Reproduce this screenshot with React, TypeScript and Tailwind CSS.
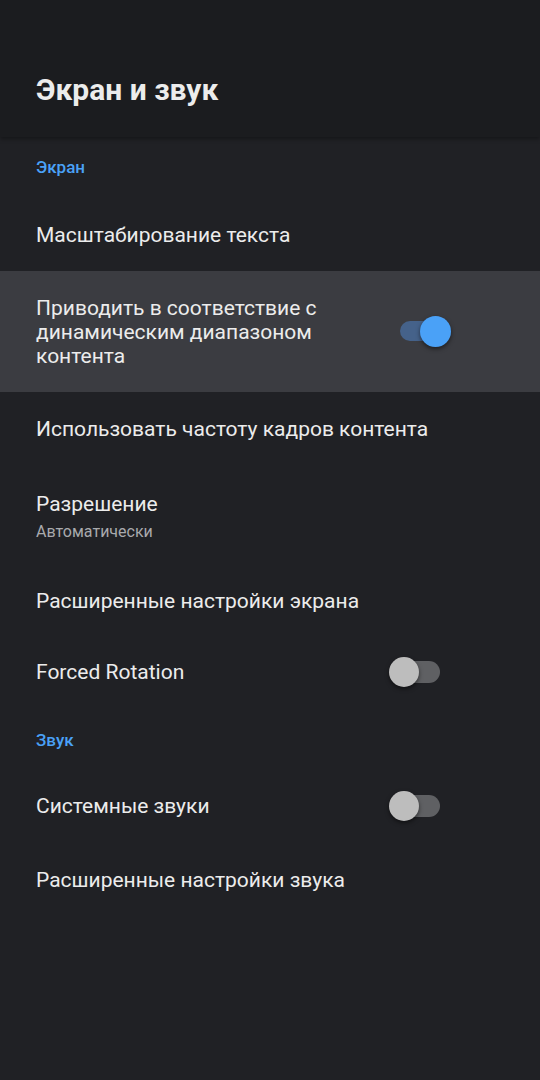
import React from "react";

function Toggle({ on }: { on: boolean }) {
  if (on) {
    return (
      <div className="relative h-[31px] w-[51px] shrink-0">
        <div className="absolute left-0 top-[5px] h-[20px] w-[44px] rounded-full bg-[#45628a]" />
        <div className="absolute right-0 top-0 h-[31px] w-[31px] rounded-full bg-[#4aa1f7] shadow-[0_2px_4px_rgba(0,0,0,0.5)]" />
      </div>
    );
  }
  return (
    <div className="relative h-[30px] w-[51px] shrink-0">
      <div className="absolute right-0 top-[4px] h-[22px] w-[46px] rounded-full bg-[#5f6063]" />
      <div className="absolute left-0 top-0 h-[30px] w-[30px] rounded-full bg-[#bdbdbd] shadow-[0_2px_4px_rgba(0,0,0,0.5)]" />
    </div>
  );
}

function Section({ title, h }: { title: string; h: string }) {
  return (
    <div className={`flex items-center px-9 ${h}`}>
      <span className="text-[17px] font-medium text-[#4aa1f7]">{title}</span>
    </div>
  );
}

function Row({
  label,
  sub,
  h,
  toggle,
}: {
  label: string;
  sub?: string;
  h: string;
  toggle?: boolean;
}) {
  return (
    <div className={`flex items-center justify-between pl-9 pr-[100px] ${h}`}>
      <div className="flex flex-col">
        <span className="text-[21px] leading-[24px] text-[#ececec]">{label}</span>
        {sub && <span className="mt-[7px] text-[16px] leading-[18px] text-[#a9aaad]">{sub}</span>}
      </div>
      {toggle !== undefined && <Toggle on={toggle} />}
    </div>
  );
}

export default function App() {
  return (
    <div className="min-h-[1080px] w-[540px] bg-[#202125] font-['Roboto',sans-serif]">
      <div className="relative z-10 flex h-[137px] items-end bg-[#1b1c1f] px-9 pb-[29px] shadow-[0_2px_4px_rgba(0,0,0,0.35)]">
        <h1 className="text-[30px] font-bold leading-[36px] text-[#ececec]">Экран и звук</h1>
      </div>
      <Section title="Экран" h="h-[62px]" />
      <Row label="Масштабирование текста" h="h-[72px]" />
      <div className="flex h-[121px] items-center justify-between bg-[#3b3c41] pl-9 pr-[89px]">
        <span className="w-[310px] text-[21px] leading-[24px] text-[#ececec]">
          Приводить в соответствие с динамическим диапазоном контента
        </span>
        <Toggle on={true} />
      </div>
      <Row label="Использовать частоту кадров контента" h="h-[73px]" />
      <Row label="Разрешение" sub="Автоматически" h="h-[102px]" />
      <Row label="Расширенные настройки экрана" h="h-[68px]" />
      <Row label="Forced Rotation" h="h-[74px]" toggle={false} />
      <Section title="Звук" h="h-[63px]" />
      <Row label="Системные звуки" h="h-[68px]" toggle={false} />
      <Row label="Расширенные настройки звука" h="h-[80px]" />
    </div>
  );
}
